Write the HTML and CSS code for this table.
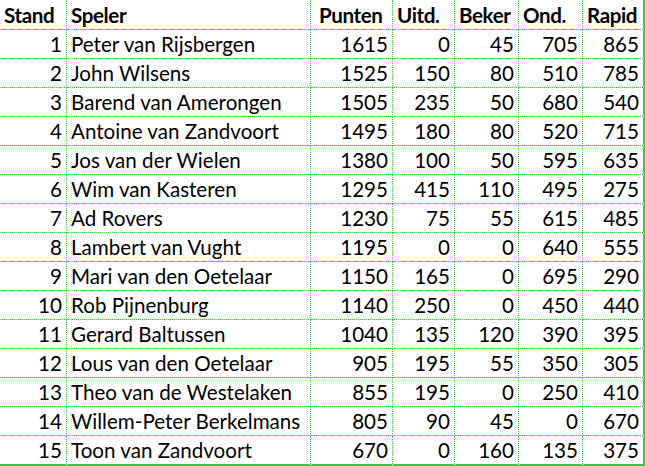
FILE: index.html
```html
<!DOCTYPE html>
<html lang="nl">
<head>
<meta charset="utf-8">
<title>Stand</title>
<link rel="stylesheet" href="styles.css">
</head>
<body>
<table class="stand">
  <colgroup>
    <col class="c-stand"><col class="c-speler"><col class="c-punten"><col class="c-uitd"><col class="c-beker"><col class="c-ond"><col class="c-rapid">
  </colgroup>
  <thead>
    <tr><th>Stand</th><th>Speler</th><th class="h-punten">Punten</th><th>Uitd.</th><th>Beker</th><th>Ond.</th><th>Rapid</th></tr>
  </thead>
  <tbody>
    <tr><td class="num">1</td><td>Peter van Rijsbergen</td><td class="num">1615</td><td class="num">0</td><td class="num">45</td><td class="num">705</td><td class="num">865</td></tr>
    <tr><td class="num">2</td><td>John Wilsens</td><td class="num">1525</td><td class="num">150</td><td class="num">80</td><td class="num">510</td><td class="num">785</td></tr>
    <tr><td class="num">3</td><td>Barend van Amerongen</td><td class="num">1505</td><td class="num">235</td><td class="num">50</td><td class="num">680</td><td class="num">540</td></tr>
    <tr><td class="num">4</td><td>Antoine van Zandvoort</td><td class="num">1495</td><td class="num">180</td><td class="num">80</td><td class="num">520</td><td class="num">715</td></tr>
    <tr><td class="num">5</td><td>Jos van der Wielen</td><td class="num">1380</td><td class="num">100</td><td class="num">50</td><td class="num">595</td><td class="num">635</td></tr>
    <tr><td class="num">6</td><td>Wim van Kasteren</td><td class="num">1295</td><td class="num">415</td><td class="num">110</td><td class="num">495</td><td class="num">275</td></tr>
    <tr><td class="num">7</td><td>Ad Rovers</td><td class="num">1230</td><td class="num">75</td><td class="num">55</td><td class="num">615</td><td class="num">485</td></tr>
    <tr><td class="num">8</td><td>Lambert van Vught</td><td class="num">1195</td><td class="num">0</td><td class="num">0</td><td class="num">640</td><td class="num">555</td></tr>
    <tr><td class="num">9</td><td>Mari van den Oetelaar</td><td class="num">1150</td><td class="num">165</td><td class="num">0</td><td class="num">695</td><td class="num">290</td></tr>
    <tr><td class="num">10</td><td>Rob Pijnenburg</td><td class="num">1140</td><td class="num">250</td><td class="num">0</td><td class="num">450</td><td class="num">440</td></tr>
    <tr><td class="num">11</td><td>Gerard Baltussen</td><td class="num">1040</td><td class="num">135</td><td class="num">120</td><td class="num">390</td><td class="num">395</td></tr>
    <tr><td class="num">12</td><td>Lous van den Oetelaar</td><td class="num">905</td><td class="num">195</td><td class="num">55</td><td class="num">350</td><td class="num">305</td></tr>
    <tr><td class="num">13</td><td>Theo van de Westelaken</td><td class="num">855</td><td class="num">195</td><td class="num">0</td><td class="num">250</td><td class="num">410</td></tr>
    <tr><td class="num">14</td><td>Willem-Peter Berkelmans</td><td class="num">805</td><td class="num">90</td><td class="num">45</td><td class="num">0</td><td class="num">670</td></tr>
    <tr><td class="num">15</td><td>Toon van Zandvoort</td><td class="num">670</td><td class="num">0</td><td class="num">160</td><td class="num">135</td><td class="num">375</td></tr>
  </tbody>
</table>
</body>
</html>
```
FILE: styles.css
```css
html, body {
  margin: 0;
  padding: 0;
  background: #ffffff;
}

.stand {
  border-collapse: separate;
  border-spacing: 0;
  table-layout: fixed;
  width: 645px;
  font-family: Lato, "Liberation Sans", sans-serif;
  font-size: 20.6px;
  color: #000000;
}

.c-stand { width: 67px; }
.c-speler { width: 244px; }
.c-punten { width: 82px; }
.c-uitd { width: 62px; }
.c-beker { width: 64px; }
.c-ond { width: 64px; }
.c-rapid { width: 62px; }

.stand th,
.stand td {
  box-sizing: border-box;
  height: 29px;
  padding: 0 4px;
  border-right: 1px dotted #33cc33;
  border-bottom: 1px dotted #33cc33;
  text-align: left;
  vertical-align: middle;
  white-space: nowrap;
  overflow: hidden;
  line-height: 28px;
}

.stand th {
  height: 30px;
  font-weight: bold;
  letter-spacing: -0.4px;
}

.stand .h-punten {
  padding-left: 8px;
}

.stand td.num {
  text-align: right;
}

.stand th:last-child,
.stand td:last-child {
  border-right: 2px solid #33cc33;
}

.stand tbody tr:last-child td {
  border-bottom: 2px solid #33cc33;
  height: 30px;
}
```
